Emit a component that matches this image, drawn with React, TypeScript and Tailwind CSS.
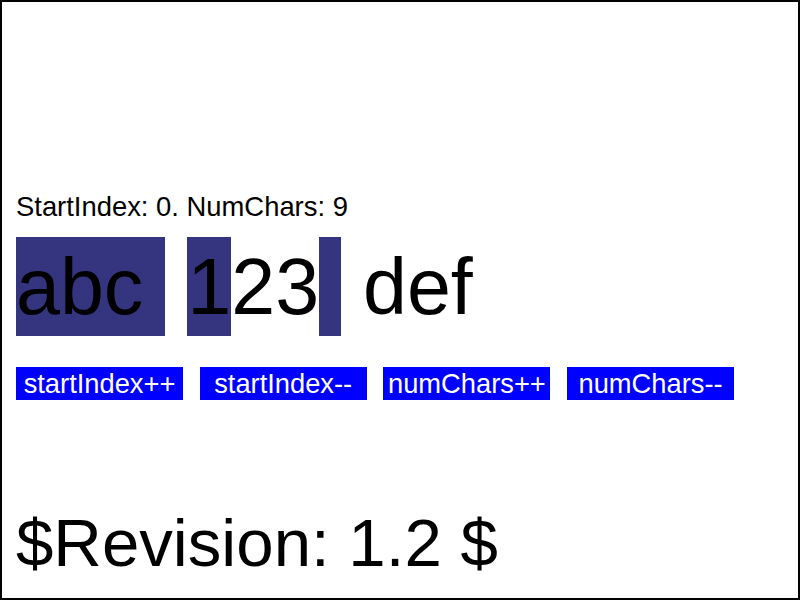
import { useState } from "react";

const font = { fontFamily: '"Liberation Sans", Arial, sans-serif' };

const buttons = ["startIndex++", "startIndex--", "numChars++", "numChars--"];

export default function App() {
  const [startIndex] = useState(0);
  const [numChars] = useState(9);

  return (
    <div
      className="w-[800px] h-[600px] box-border border-2 border-black bg-white pl-[14px] pt-[190px] text-black overflow-hidden"
      style={font}
    >
      <div className="text-[27.4px] leading-[30px] h-[30px] whitespace-pre">
        StartIndex: {startIndex}. NumChars: {numChars}
      </div>

      {/* selected glyphs drawn as boxes behind the text */}
      <div className="mt-[15px] flex h-[99px] text-[79px] leading-[99px] whitespace-pre">
        <span className="h-[99px] bg-[#34347f]">abc </span>
        <span className="h-[99px]"> </span>
        <span className="h-[99px] bg-[#34347f]">1</span>
        <span className="h-[99px]">23</span>
        <span className="h-[99px] bg-[#34347f]"> </span>
        <span className="h-[99px]"> def</span>
      </div>

      <div className="mt-[31px] flex gap-[16.7px]">
        {buttons.map((b) => (
          <div
            key={b}
            className="w-[167px] h-[33px] bg-[#0000ff] text-white text-[27.3px] leading-[33px] text-center whitespace-pre"
          >
            {b}
          </div>
        ))}
      </div>

      <div className="mt-[105px] text-[67.2px] leading-[75px] whitespace-pre">$Revision: 1.2 $</div>
    </div>
  );
}
